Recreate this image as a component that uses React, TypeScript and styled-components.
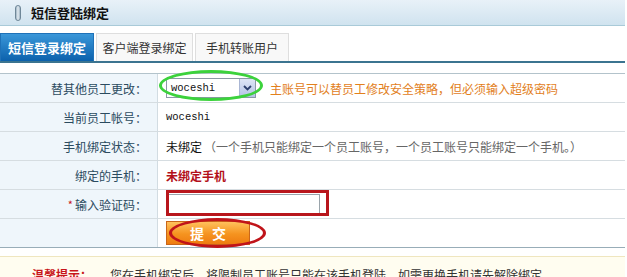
import React from "react";
import styled, { createGlobalStyle } from "styled-components";

const Global = createGlobalStyle`
  html, body { margin: 0; padding: 0; background: #fff; }
  body { font-family: "Noto Sans CJK SC", "Liberation Sans", sans-serif; font-size: 12px; color: #333; overflow: hidden; }
`;

const Page = styled.div`
  width: 625px;
  display: flex;
  flex-direction: column;
`;

const Header = styled.div`
  height: 25px;
  border-bottom: 1px solid #a9cad8;
  background: linear-gradient(#e8f1f8, #d0e3ef);
  display: flex;
  align-items: center;
  gap: 10px;
  padding-left: 15px;
`;

const HeaderIcon = styled.span`
  width: 4px;
  height: 14px;
  border-radius: 3px;
  border: 1px solid #6f8798;
  background: linear-gradient(90deg, #9fb3c2, #e4edf3, #9fb3c2);
`;

const HeaderTitle = styled.span`
  font-weight: bold;
  font-size: 13px;
  color: #111;
`;

const Tabs = styled.div`
  margin-top: 7px;
  display: flex;
  gap: 2px;
  border-bottom: 2px solid #3b7490;
`;

const Tab = styled.div<{ $active?: boolean; $w: number }>`
  width: ${(p) => p.$w}px;
  height: 28px;
  box-sizing: border-box;
  display: flex;
  align-items: center;
  justify-content: center;
  font-size: ${(p) => (p.$active ? "13px" : "12px")};
  font-weight: ${(p) => (p.$active ? "bold" : "normal")};
  color: ${(p) => (p.$active ? "#fff" : "#333")};
  background: ${(p) => (p.$active ? "linear-gradient(#3a97d9, #0c61ac)" : "#f8f8f8")};
  border: 1px solid ${(p) => (p.$active ? "#1f72b8" : "#dedede")};
  border-bottom: none;
`;

const Form = styled.div`
  margin-top: 10px;
  border-top: 1px solid #b3c3cb;
  border-bottom: 1px solid #98adb8;
  display: grid;
  grid-template-columns: 158px 1fr;
`;

const Label = styled.div<{ $last?: boolean }>`
  height: 28px;
  border-right: 1px solid #d2dce2;
  border-bottom: ${(p) => (p.$last ? "none" : "1px solid #d6dde1")};
  background: #eff6fb;
  display: flex;
  align-items: center;
  justify-content: flex-end;
  padding-right: 10px;
  color: #2b4b5f;
  font-size: 12px;
`;

const Value = styled.div<{ $last?: boolean }>`
  height: 28px;
  border-bottom: ${(p) => (p.$last ? "none" : "1px solid #d6dde1")};
  display: flex;
  align-items: center;
  padding-left: 8px;
  gap: 8px;
  position: relative;
`;

const Star = styled.span`
  color: #c8141a;
  font-size: 11px;
  margin-right: 2px;
`;

const Mono = styled.span`
  font-family: "Liberation Mono", "DejaVu Sans Mono", monospace;
  font-size: 10.5px;
  color: #111;
`;

const SelectBox = styled.div`
  width: 90px;
  height: 20px;
  box-sizing: border-box;
  border: 1px solid #8c99a6;
  display: flex;
  align-items: center;
  justify-content: space-between;
  padding-left: 4px;
  background: #fff;
  margin-right: 6px;
`;

const SelectArrow = styled.span`
  width: 15px;
  height: 18px;
  background: linear-gradient(#dfe6f7, #b4c2e6);
  border-left: 1px solid #aab6d4;
  display: flex;
  align-items: center;
  justify-content: center;
`;

const Note = styled.span`
  color: #e2801c;
  font-size: 12px;
`;

const Plain = styled.span`
  color: #111;
  font-size: 12px;
`;

const Grey = styled.span`
  color: #666;
  font-size: 12px;
  margin-left: -6px;
`;

const Warn = styled.span`
  color: #b3101a;
  font-weight: bold;
  font-size: 12px;
`;

const Input = styled.div`
  width: 152px;
  height: 20px;
  box-sizing: border-box;
  border: 1px solid #9aa4ab;
  margin-left: 2px;
  background: #fff;
`;

const SubmitBtn = styled.div`
  width: 84px;
  height: 24px;
  box-sizing: border-box;
  border: 1px solid #c9661a;
  background: linear-gradient(#ffc15c, #f5931f 55%, #ee7c10);
  color: #fff;
  font-weight: bold;
  font-size: 14px;
  letter-spacing: 8px;
  padding-left: 8px;
  display: flex;
  align-items: center;
  justify-content: center;
`;

const Mark = styled.span<{ $color: string; $l: number; $t: number; $w: number; $h: number; $round?: boolean }>`
  position: absolute;
  left: ${(p) => p.$l}px;
  top: ${(p) => p.$t}px;
  width: ${(p) => p.$w}px;
  height: ${(p) => p.$h}px;
  border: 3px solid ${(p) => p.$color};
  border-radius: ${(p) => (p.$round ? "50%" : "0")};
  box-sizing: border-box;
  pointer-events: none;
`;

const Tip = styled.div`
  margin-top: 8px;
  border-top: 1px solid #efe6bf;
  background: #fffdf0;
  height: 40px;
  padding: 9px 0 0 32px;
  box-sizing: border-box;
  font-size: 12px;
  color: #333;
`;

const TipTitle = styled.span`
  color: #c8141a;
  font-weight: bold;
  margin-right: 18px;
`;

export default function App() {
  return (
    <Page>
      <Global />
      <Header>
        <HeaderIcon />
        <HeaderTitle>短信登陆绑定</HeaderTitle>
      </Header>
      <Tabs>
        <Tab $active $w={94}>短信登录绑定</Tab>
        <Tab $w={97}>客户端登录绑定</Tab>
        <Tab $w={94}>手机转账用户</Tab>
      </Tabs>
      <Form>
        <Label>替其他员工更改：</Label>
        <Value>
          <SelectBox>
            <Mono>woceshi</Mono>
            <SelectArrow>
              <svg width="9" height="6" viewBox="0 0 9 6">
                <path d="M1 1 L4.5 4.5 L8 1" fill="none" stroke="#2d3f6e" strokeWidth="1.8" />
              </svg>
            </SelectArrow>
          </SelectBox>
          <Note>主账号可以替员工修改安全策略，但必须输入超级密码</Note>
          <Mark $color="#3cd23c" $l={1} $t={-4} $w={104} $h={31} $round />
        </Value>
        <Label>当前员工帐号：</Label>
        <Value>
          <Mono>woceshi</Mono>
        </Value>
        <Label>手机绑定状态：</Label>
        <Value>
          <Plain>未绑定</Plain>
          <Grey>（一个手机只能绑定一个员工账号，一个员工账号只能绑定一个手机。）</Grey>
        </Value>
        <Label>绑定的手机：</Label>
        <Value>
          <Warn>未绑定手机</Warn>
        </Value>
        <Label>
          <Star>*</Star>输入验证码：
        </Label>
        <Value>
          <Input />
          <Mark $color="#b8161c" $l={8} $t={0} $w={163} $h={26} />
        </Value>
        <Label $last />
        <Value $last>
          <SubmitBtn>提交</SubmitBtn>
          <Mark $color="#c0141a" $l={11} $t={-1} $w={97} $h={30} $round />
        </Value>
      </Form>
      <Tip>
        <TipTitle>温馨提示：</TipTitle>
        您在手机绑定后，将限制员工账号只能在该手机登陆，如需更换手机请先解除绑定。
      </Tip>
    </Page>
  );
}
